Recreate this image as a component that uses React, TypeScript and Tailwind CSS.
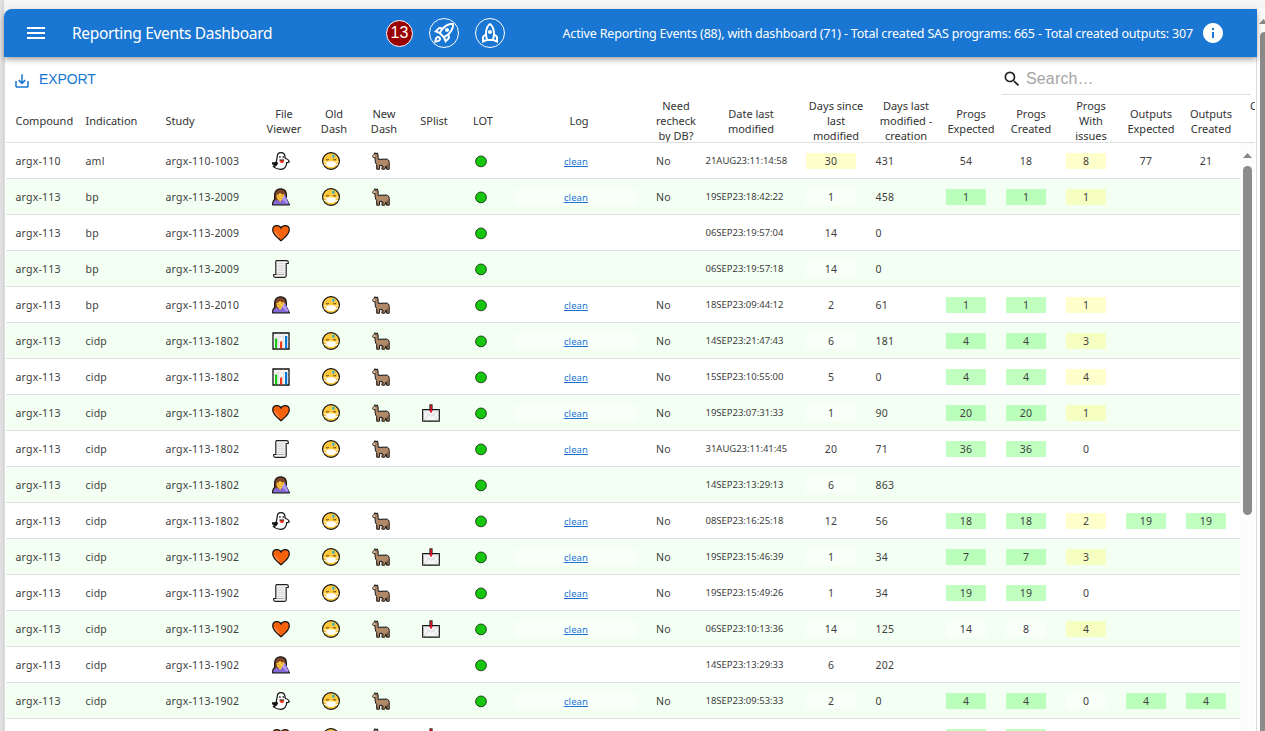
import React from "react";
import {
  MdInfo,
  MdMenu,
  MdOutlineRocket,
  MdOutlineRocketLaunch,
  MdSaveAlt,
  MdSearch,
} from "react-icons/md";

type Icon = "ghost" | "facepalm" | "heart" | "scroll" | "chart";

interface Row {
  compound: string;
  indication: string;
  study: string;
  icon: Icon;
  dash: boolean;
  splist?: boolean;
  date: string;
  since: number;
  age: number;
  progs?: [number, number, number];
  outputs?: [number, number];
}

const row = (
  study: string,
  indication: string,
  icon: Icon,
  dash: boolean,
  date: string,
  since: number,
  age: number,
  progs?: [number, number, number],
  outputs?: [number, number],
  splist?: boolean,
): Row => ({ compound: study.slice(0, 8), indication, study, icon, dash, date, since, age, progs, outputs, splist });

const rows: Row[] = [
  row("argx-110-1003", "aml", "ghost", true, "21AUG23:11:14:58", 30, 431, [54, 18, 8], [77, 21]),
  row("argx-113-2009", "bp", "facepalm", true, "19SEP23:18:42:22", 1, 458, [1, 1, 1]),
  row("argx-113-2009", "bp", "heart", false, "06SEP23:19:57:04", 14, 0),
  row("argx-113-2009", "bp", "scroll", false, "06SEP23:19:57:18", 14, 0),
  row("argx-113-2010", "bp", "facepalm", true, "18SEP23:09:44:12", 2, 61, [1, 1, 1]),
  row("argx-113-1802", "cidp", "chart", true, "14SEP23:21:47:43", 6, 181, [4, 4, 3]),
  row("argx-113-1802", "cidp", "chart", true, "15SEP23:10:55:00", 5, 0, [4, 4, 4]),
  row("argx-113-1802", "cidp", "heart", true, "19SEP23:07:31:33", 1, 90, [20, 20, 1], undefined, true),
  row("argx-113-1802", "cidp", "scroll", true, "31AUG23:11:41:45", 20, 71, [36, 36, 0]),
  row("argx-113-1802", "cidp", "facepalm", false, "14SEP23:13:29:13", 6, 863),
  row("argx-113-1802", "cidp", "ghost", true, "08SEP23:16:25:18", 12, 56, [18, 18, 2], [19, 19]),
  row("argx-113-1902", "cidp", "heart", true, "19SEP23:15:46:39", 1, 34, [7, 7, 3], undefined, true),
  row("argx-113-1902", "cidp", "scroll", true, "19SEP23:15:49:26", 1, 34, [19, 19, 0]),
  row("argx-113-1902", "cidp", "heart", true, "06SEP23:10:13:36", 14, 125, [14, 8, 4], undefined, true),
  row("argx-113-1902", "cidp", "facepalm", false, "14SEP23:13:29:33", 6, 202),
  row("argx-113-1902", "cidp", "ghost", true, "18SEP23:09:53:33", 2, 0, [4, 4, 0], [4, 4]),
  row("argx-113-1902", "cidp", "heart", true, "19SEP23:15:12:08", 1, 12, [4, 4, 0], undefined, true),
];

const iconClass = "block h-[18px] w-[18px] shrink-0 overflow-visible";

function Ghost() {
  return (
    <svg viewBox="0 0 18 18" className={iconClass}>
      <path
        d="M5.2 4.6C5.4 1.8 7 .7 9 .7c2.500 0 3.900 1.500 4 4.300l.4 1.500c1.500.2 3.300 1.700 4 3.200-.6.900-1.700 1-2.800.8.1 3.800-2 6.800-6 6.800-2.900 0-5.400-1.100-7.400-2.700 1.400 0 2.200-.4 2.700-1.300C1.700 13.700.7 12.500.5 10.900c1.400.5 2.700.1 3.800-1z"
        fill="#fff"
        stroke="#111"
        strokeWidth="1.200"
        strokeLinejoin="round"
      />
      <path d="M.5 10.500c1.500.4 2.800-.2 3.700-1.100l2 1.500-1.300 2.700c-2 .4-4-.8-4.400-3.100z" fill="#111" />
      <ellipse cx="7.900" cy="5" rx=".7" ry="1" fill="#111" />
      <ellipse cx="11.200" cy="5" rx=".7" ry="1" fill="#111" />
      <path d="M7.400 7.700h4.800c-.1 2-1 3.500-2.300 3.500S7.600 9.700 7.400 7.700z" fill="#f03a17" />
      <path d="M7.400 7.500h4.800l-.3.900H7.700z" fill="#333" />
    </svg>
  );
}

function Facepalm() {
  return (
    <svg viewBox="0 0 18 18" className={iconClass}>
      <path
        d="M2.600 11.500V7C2.600 3 5.200.8 8.500.8S14.400 3 14.400 7v4l3 5.800H.6c0-2.500.4-4.200 2-5.300z"
        fill="#7a4529"
        stroke="#111"
        strokeWidth="1.200"
        strokeLinejoin="round"
      />
      <path d="M4.500 7c1.500-.2 2.800-1 3.600-2.200C9.200 6.200 10.500 6.800 12.300 7c.1 3.600-1.500 5.600-3.900 5.600S4.500 10.500 4.500 7z" fill="#ffc83d" />
      <path d="M1.200 16.300c0-3 1.200-4.100 4.300-4.300l2.800 1.800 2.300-3.500 1.600-3.500c.8 0 1.400.5 1.600 1.200l3.200 8.300z" fill="#8467d8" />
      <path d="M9.700 10.800l2.700-3.500 3.900 8.300-2.300-.8z" fill="#b29af2" />
      <path d="M7.200 9.800l4.400-4 .8.900-2.700 4.600-1.500 2.900c-1.300-1.300-1.600-2.700-1-4.400z" fill="#ffc83d" />
      <path d="M5.700 8.300l1.700.2M7.200 10.700l1.500-.4M9.500 7.200l1.500.7" stroke="#ad6a1a" strokeWidth=".7" />
    </svg>
  );
}

function Heart() {
  return (
    <svg viewBox="0 0 18 18" className={iconClass}>
      <path
        d="M9 16.800C5.200 13.600.7 10.200.7 6c0-2.600 1.800-4.300 4.100-4.300C6.700 1.700 8.200 2.300 9 4c.8-1.700 2.300-2.300 4.200-2.300 2.300 0 4.100 1.700 4.100 4.300 0 4.200-4.500 7.600-8.300 10.800z"
        fill="#f7630c"
        stroke="#111"
        strokeWidth="1.200"
      />
      <path d="M2.800 7.500C3.600 9.900 5.300 11.500 7 13" stroke="#ff9350" strokeWidth="1.200" fill="none" />
    </svg>
  );
}

function Scroll() {
  return (
    <svg viewBox="0 0 18 18" className={iconClass}>
      <path
        d="M4.200.7h10.500c1.200 0 1.600.7 1.600 1.500v1.300h-2.100v12c0 1-.5 1.800-1.500 1.800H3.200c-1.200 0-1.600-.7-1.600-1.500v-1.300h2.200V3.200C3.800 1.900 3.600 1.100 4.200.7z"
        fill="#f5f5f5"
        stroke="#222"
        strokeWidth="1.200"
        strokeLinejoin="round"
      />
      <path d="M5.500 3.800h7M5.500 6h7M5.500 8.200h7M5.500 10.400h7M5.500 12.600h7" stroke="#cfcfcf" strokeWidth=".9" />
      <path d="M4 14.500h8.500" stroke="#777" strokeWidth=".6" />
    </svg>
  );
}

function Chart() {
  return (
    <svg viewBox="0 0 18 18" className={iconClass}>
      <path d="M1 1h16v16H1z" fill="#f5f5f5" stroke="#111" strokeWidth="1.300" />
      <path d="M6.500 1.600v15M11.500 1.600v15M1.500 5h15M1.500 9h15" stroke="#dedede" strokeWidth=".7" />
      <path d="M3 6.500h2.200v10H3z" fill="#16c60c" />
      <path d="M8 9.500h2.200v7H8z" fill="#f03a17" />
      <path d="M13 4h2.200v12.500H13z" fill="#0078d7" />
    </svg>
  );
}

function MaskFace() {
  return (
    <svg viewBox="0 0 18 18" className={iconClass}>
      <circle cx="9" cy="9" r="8.400" fill="#ffc83d" stroke="#111" strokeWidth="1.200" />
      <path d="M1.500 9.500l4 1M1.800 12.500l3.200.5M16.500 9.500l-4 1M16.200 12.500l-3.200.5" stroke="#fff" strokeWidth=".9" />
      <path d="M4.500 10c2.500-1 6.500-1 9 0 .4 3-.8 5-4.500 5S4.100 13 4.500 10z" fill="#fff" />
      <path d="M4 7.300c.8.8 2.100.8 2.900 0M11.100 7.300c.8.800 2.100.8 2.900 0" stroke="#3a2a10" strokeWidth=".9" fill="none" />
      <path d="M11.400 2.300c.9.900 1.200 1.500 1.200 2.200 0 .8-.5 1.200-1.200 1.200s-1.200-.4-1.200-1.200c0-.7.3-1.300 1.200-2.200z" fill="#12b5e8" />
    </svg>
  );
}

function Llama() {
  return (
    <svg viewBox="0 0 18 18" className={iconClass}>
      <path
        d="M2.300 2.300L2.800.7l1.200 1 1.300-.8.8 2.200v4.200l8.600-.2c1.500.2 2.500 1.600 2.500 3.200v6.900h-2.700l-.5-3.300-1.300 3.300H9.900l.4-3.700-2.600-.2-.3 3.900H4.700v-4.700C3.200 11 3 8.500 3 5.300H1.100L.7 3.700z"
        fill="#b08a68"
        stroke="#111"
        strokeWidth="1"
        strokeLinejoin="round"
      />
      <path d="M1.200 3.700l1.700-1.200 1 1.200-1.400 1.300H1.300z" fill="#e8c8b4" />
      <path d="M5.200 14v2.700M15.800 12v4.500M11.300 14v2.700" stroke="#6d4a34" strokeWidth="1" />
      <circle cx="3.900" cy="3.100" r=".5" fill="#111" />
    </svg>
  );
}

function Envelope() {
  return (
    <svg viewBox="0 0 18 18" className={iconClass}>
      <path d="M.7 5.600h16.600v11.600H.7z" fill="#f5f5f5" stroke="#111" strokeWidth="1.200" />
      <path d="M1.300 6.200L9 12.200l7.700-6M1.300 16.500l5.500-5.800M16.700 16.500l-5.500-5.800" fill="none" stroke="#d2d2d2" strokeWidth=".9" />
      <path d="M7.400.3h3.200v5.300H7.400z" fill="#222" />
      <path d="M8.200 1h1.600v5.300h1.300L9 9.200 6.900 6.300h1.300z" fill="#e81224" />
    </svg>
  );
}

function Dot() {
  return (
    <svg viewBox="0 0 18 18" className={iconClass}>
      <circle cx="9" cy="9.400" r="5.400" fill="#16c60c" stroke="#1c3a1c" strokeWidth=".9" />
    </svg>
  );
}

const viewerIcons: Record<Icon, () => React.JSX.Element> = {
  ghost: Ghost,
  facepalm: Facepalm,
  heart: Heart,
  scroll: Scroll,
  chart: Chart,
};

type Tone = "plain" | "green" | "yellow";
const tones: Record<Tone, string> = {
  plain: "bg-white/50",
  green: "bg-[#75ff75]/45",
  yellow: "bg-[#f9ff75]/40",
};
const yellowOnWhite = "bg-[#ffffcc]";

function Chip({ value, tone, striped }: { value?: number; tone: Tone; striped: boolean }) {
  const fill = tone === "yellow" && !striped ? yellowOnWhite : tones[tone];
  return (
    <div className="w-[60px] shrink-0 px-2.5">
      {value !== undefined && <div className={`h-4 text-center leading-4 ${fill}`}>{value}</div>}
    </div>
  );
}

function IconCell({ children }: { children?: React.ReactNode }) {
  return <div className="flex w-[50px] shrink-0 justify-center">{children}</div>;
}

function TableRow({ data, striped }: { data: Row; striped: boolean }) {
  const Viewer = viewerIcons[data.icon];
  const [expected, created, issues] = data.progs ?? [];
  const [outExpected, outCreated] = data.outputs ?? [];
  const progTone: Tone = expected === created ? "green" : "plain";
  const outTone: Tone = outExpected === outCreated ? "green" : "plain";
  return (
    <div
      className={`flex h-9 shrink-0 items-center border-b border-[#e0e0e0] ${striped ? "bg-[#f3fff3]" : "bg-white"}`}
    >
      <div className="w-[70px] shrink-0 pl-[9.500px]">{data.compound}</div>
      <div className="w-20 shrink-0 pl-[9.500px]">{data.indication}</div>
      <div className="w-[100px] shrink-0 pl-[9.500px]">{data.study}</div>
      <IconCell>
        <Viewer />
      </IconCell>
      <IconCell>{data.dash && <MaskFace />}</IconCell>
      <IconCell>{data.dash && <Llama />}</IconCell>
      <IconCell>{data.splist && <Envelope />}</IconCell>
      <IconCell>
        <Dot />
      </IconCell>
      <div className="w-[140px] shrink-0 px-2.5">
        {data.dash && (
          <div className="h-4 bg-white/50 text-center text-[9.500px] leading-[17px] tracking-[0.1px]">
            <a href="#" className="text-[#1976d2] underline">
              clean
            </a>
          </div>
        )}
      </div>
      <div className="w-[50px] shrink-0 pl-2.5">{data.dash && "No"}</div>
      <div className="w-[100px] shrink-0 pl-[9.500px] text-[9.500px] tracking-[-0.020px]">{data.date}</div>
      <div className="w-[70px] shrink-0 px-2.5">
        <div className={`h-4 text-center leading-4 ${data.since >= 30 ? yellowOnWhite : tones.plain}`}>{data.since}</div>
      </div>
      <div className="w-[70px] shrink-0 pl-[9.500px]">{data.age}</div>
      <Chip value={expected} tone={progTone} striped={striped} />
      <Chip value={created} tone={progTone} striped={striped} />
      <Chip value={issues} tone={issues ? "yellow" : "plain"} striped={striped} />
      <Chip value={outExpected} tone={outTone} striped={striped} />
      <Chip value={outCreated} tone={outTone} striped={striped} />
    </div>
  );
}

const headers: { lines: string[]; width: string }[] = [
  { lines: ["File", "Viewer"], width: "w-[50px]" },
  { lines: ["Old", "Dash"], width: "w-[50px]" },
  { lines: ["New", "Dash"], width: "w-[50px]" },
  { lines: ["SPlist"], width: "w-[50px]" },
  { lines: ["LOT"], width: "w-[48px]" },
  { lines: ["Log"], width: "w-[144px]" },
  { lines: ["Need", "recheck", "by DB?"], width: "w-[50px]" },
  { lines: ["Date last", "modified"], width: "w-[100px]" },
  { lines: ["Days since", "last", "modified"], width: "w-[70px]" },
  { lines: ["Days last", "modified -", "creation"], width: "w-[70px]" },
  { lines: ["Progs", "Expected"], width: "w-[60px]" },
  { lines: ["Progs", "Created"], width: "w-[60px]" },
  { lines: ["Progs", "With", "issues"], width: "w-[60px]" },
  { lines: ["Outputs", "Expected"], width: "w-[60px]" },
  { lines: ["Outputs", "Created"], width: "w-[60px]" },
  { lines: ["Outputs", "With", "issues"], width: "w-[60px]" },
];

function TableHeader() {
  return (
    <div className="flex h-12 w-[1249px] shrink-0 items-center overflow-hidden border-b border-[#e0e0e0] pt-1 text-[11px] leading-[15px] text-[#333]">
      <div className="w-[70px] shrink-0 pl-[9.500px]">Compound</div>
      <div className="w-20 shrink-0 pl-[9.500px]">Indication</div>
      <div className="w-[103px] shrink-0 pl-[9.500px]">Study</div>
      {headers.map((h, i) => (
        <div key={i} className={`flex shrink-0 flex-col items-center whitespace-nowrap ${h.width}`}>
          {h.lines.map((line) => (
            <span key={line}>{line}</span>
          ))}
        </div>
      ))}
    </div>
  );
}

function AppBar() {
  return (
    <header className="z-10 flex h-12 w-[1253px] shrink-0 items-center rounded-tl-lg bg-[#1976d2] text-white shadow-[0_2px_4px_-1px_rgba(0,0,0,0.2),0_4px_5px_0_rgba(0,0,0,0.14),0_1px_10px_0_rgba(0,0,0,0.12)]">
      <MdMenu className="ml-5 h-6 w-6 shrink-0" />
      <h1 className="ml-6 w-[314px] shrink-0 whitespace-nowrap pt-0.5 text-[15.500px] tracking-[-0.320px]">
        Reporting Events Dashboard
      </h1>
      <div className="flex h-[27px] w-[27px] shrink-0 items-center justify-center rounded-full border border-white bg-[#990000] font-['Liberation_Sans',sans-serif] text-[16px]">
        13
      </div>
      <div className="ml-4 flex h-[30px] w-[30px] shrink-0 items-center justify-center rounded-full border border-white">
        <MdOutlineRocketLaunch className="h-6 w-6 shrink-0" />
      </div>
      <div className="ml-4 flex h-[30px] w-[30px] shrink-0 items-center justify-center rounded-full border border-white">
        <MdOutlineRocket className="h-6 w-6 shrink-0" />
      </div>
      <p className="ml-auto whitespace-nowrap pt-[3px] text-[12.500px] tracking-[-0.180px]">
        Active Reporting Events (88), with dashboard (71) - Total created SAS programs: 665 - Total created outputs: 307
      </p>
      <MdInfo className="ml-2 mr-8 h-6 w-6 shrink-0" />
    </header>
  );
}

function Toolbar() {
  return (
    <div className="flex h-[38px] shrink-0 items-start justify-between pl-2 pr-[5px] font-['Liberation_Sans',sans-serif]">
      <button className="mt-[13px] flex h-[18px] items-center text-[14px] tracking-[-0.100px] text-[#1976d2]">
        <MdSaveAlt className="mr-2 mt-1 h-[18px] w-[18px]" />
        EXPORT
      </button>
      <div className="flex h-[38px] w-[249px] items-center border-b border-[#e0e0e0] pt-1.5">
        <MdSearch className="h-5 w-5 text-[#222]" />
        <span className="ml-1 text-[16px] tracking-[0.15px] text-[#a5a5a5]">Search…</span>
      </div>
    </div>
  );
}

export default function App() {
  return (
    <div className="flex h-[731px] w-[1265px] overflow-hidden bg-[#f6f6f6] font-['Noto_Sans',sans-serif]">
      <div className="w-1 shrink-0 bg-linear-to-r from-[#e4e4e4] to-[#d6d6d6]" />
      <main className="flex w-[1253px] shrink-0 flex-col pt-[9px]">
        <AppBar />
        <section className="flex h-[674px] w-[1253px] flex-col border-x border-[#dcdcdc] bg-white">
          <Toolbar />
          <div className="flex min-h-0 flex-1 flex-col pl-px">
            <TableHeader />
            <div className="flex min-h-0 flex-1">
              <div className="flex w-[1234px] shrink-0 flex-col overflow-hidden text-[10.500px] leading-4 tracking-[0.220px] text-[#404040]">
                {rows.map((r, i) => (
                  <TableRow key={i} data={r} striped={i % 2 === 1} />
                ))}
              </div>
              <div className="flex w-[15px] flex-col items-center bg-[#fcfcfc] pt-[10px]">
                <svg viewBox="0 0 9 5" className="h-[5px] w-[9px]">
                  <path d="M4.500 0L9 5H0z" fill="#888" />
                </svg>
                <div className="mt-2 h-[349px] w-[9px] rounded-full bg-[#8b8b8b]" />
              </div>
            </div>
          </div>
        </section>
      </main>
      <div className="flex flex-1 flex-col items-start overflow-hidden bg-[#fcfcfc]">
        <div className="h-2 w-full bg-[#f6f6f6]" />
        <svg viewBox="0 0 9 5" className="ml-0.5 mt-[11px] h-[5px] w-[9px] shrink-0">
          <path d="M4.500 0L9 5H0z" fill="#888" />
        </svg>
        <div className="ml-[3px] mt-2 h-[699px] w-[9px] shrink-0 rounded-t-full bg-[#8b8b8b]" />
      </div>
    </div>
  );
}
